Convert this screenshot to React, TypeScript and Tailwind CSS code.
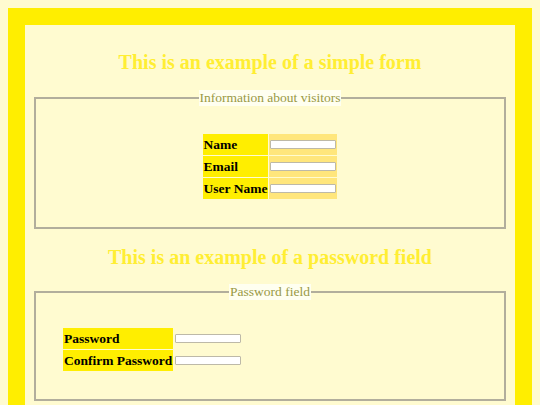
import React from 'react';

const serif = "font-['Liberation_Serif','Times_New_Roman',serif]";

function Field({ label, wide }: { label: string; wide?: boolean }) {
  return (
    <tr>
      <td className="h-[21px] bg-[#ffee00] px-px text-[13.5px] font-bold leading-none text-black whitespace-nowrap">
        {label}
      </td>
      <td className={`h-[21px] px-px align-middle ${wide ? 'bg-[#ffe67c]' : ''}`}>
        <input
          type="text"
          className="block h-[9px] w-[66px] rounded-[1px] border border-[#bdb9a8] bg-white p-0"
        />
      </td>
    </tr>
  );
}

export default function App() {
  return (
    <div className={`min-h-[405px] bg-[#fffbd0] p-2 ${serif}`}>
      <div className="border-[17px] border-[#ffee00] px-[9px] pb-[40px]">
        {/* simple form */}
        <h2 className="mt-[24px] mb-[15px] text-center text-[20px] font-bold leading-[26px] text-[#ffee33]">
          This is an example of a simple form
        </h2>
        <fieldset className="border-2 border-[#b2ae9c] px-[26px] pt-[27px] pb-[27px]">
          <legend className="mx-auto bg-[#fffff0] px-px text-[13.5px] leading-[16px] text-[#999944]">
            Information about visitors
          </legend>
          <table className="mx-auto border-separate border-spacing-[1px]">
            <tbody>
              <Field label="Name" wide />
              <Field label="Email" wide />
              <Field label="User Name" wide />
            </tbody>
          </table>
        </fieldset>

        {/* password */}
        <h2 className="mt-[15px] mb-[14px] text-center text-[20px] font-bold leading-[26px] text-[#ffee33]">
          This is an example of a password field
        </h2>
        <fieldset className="border-2 border-[#b2ae9c] px-[26px] pt-[27px] pb-[27px]">
          <legend className="mx-auto bg-[#fffff0] px-px text-[13.5px] leading-[16px] text-[#999944]">
            Password field
          </legend>
          <table className="border-separate border-spacing-[1px]">
            <tbody>
              <Field label="Password" />
              <Field label="Confirm Password" />
            </tbody>
          </table>
        </fieldset>
      </div>
    </div>
  );
}
